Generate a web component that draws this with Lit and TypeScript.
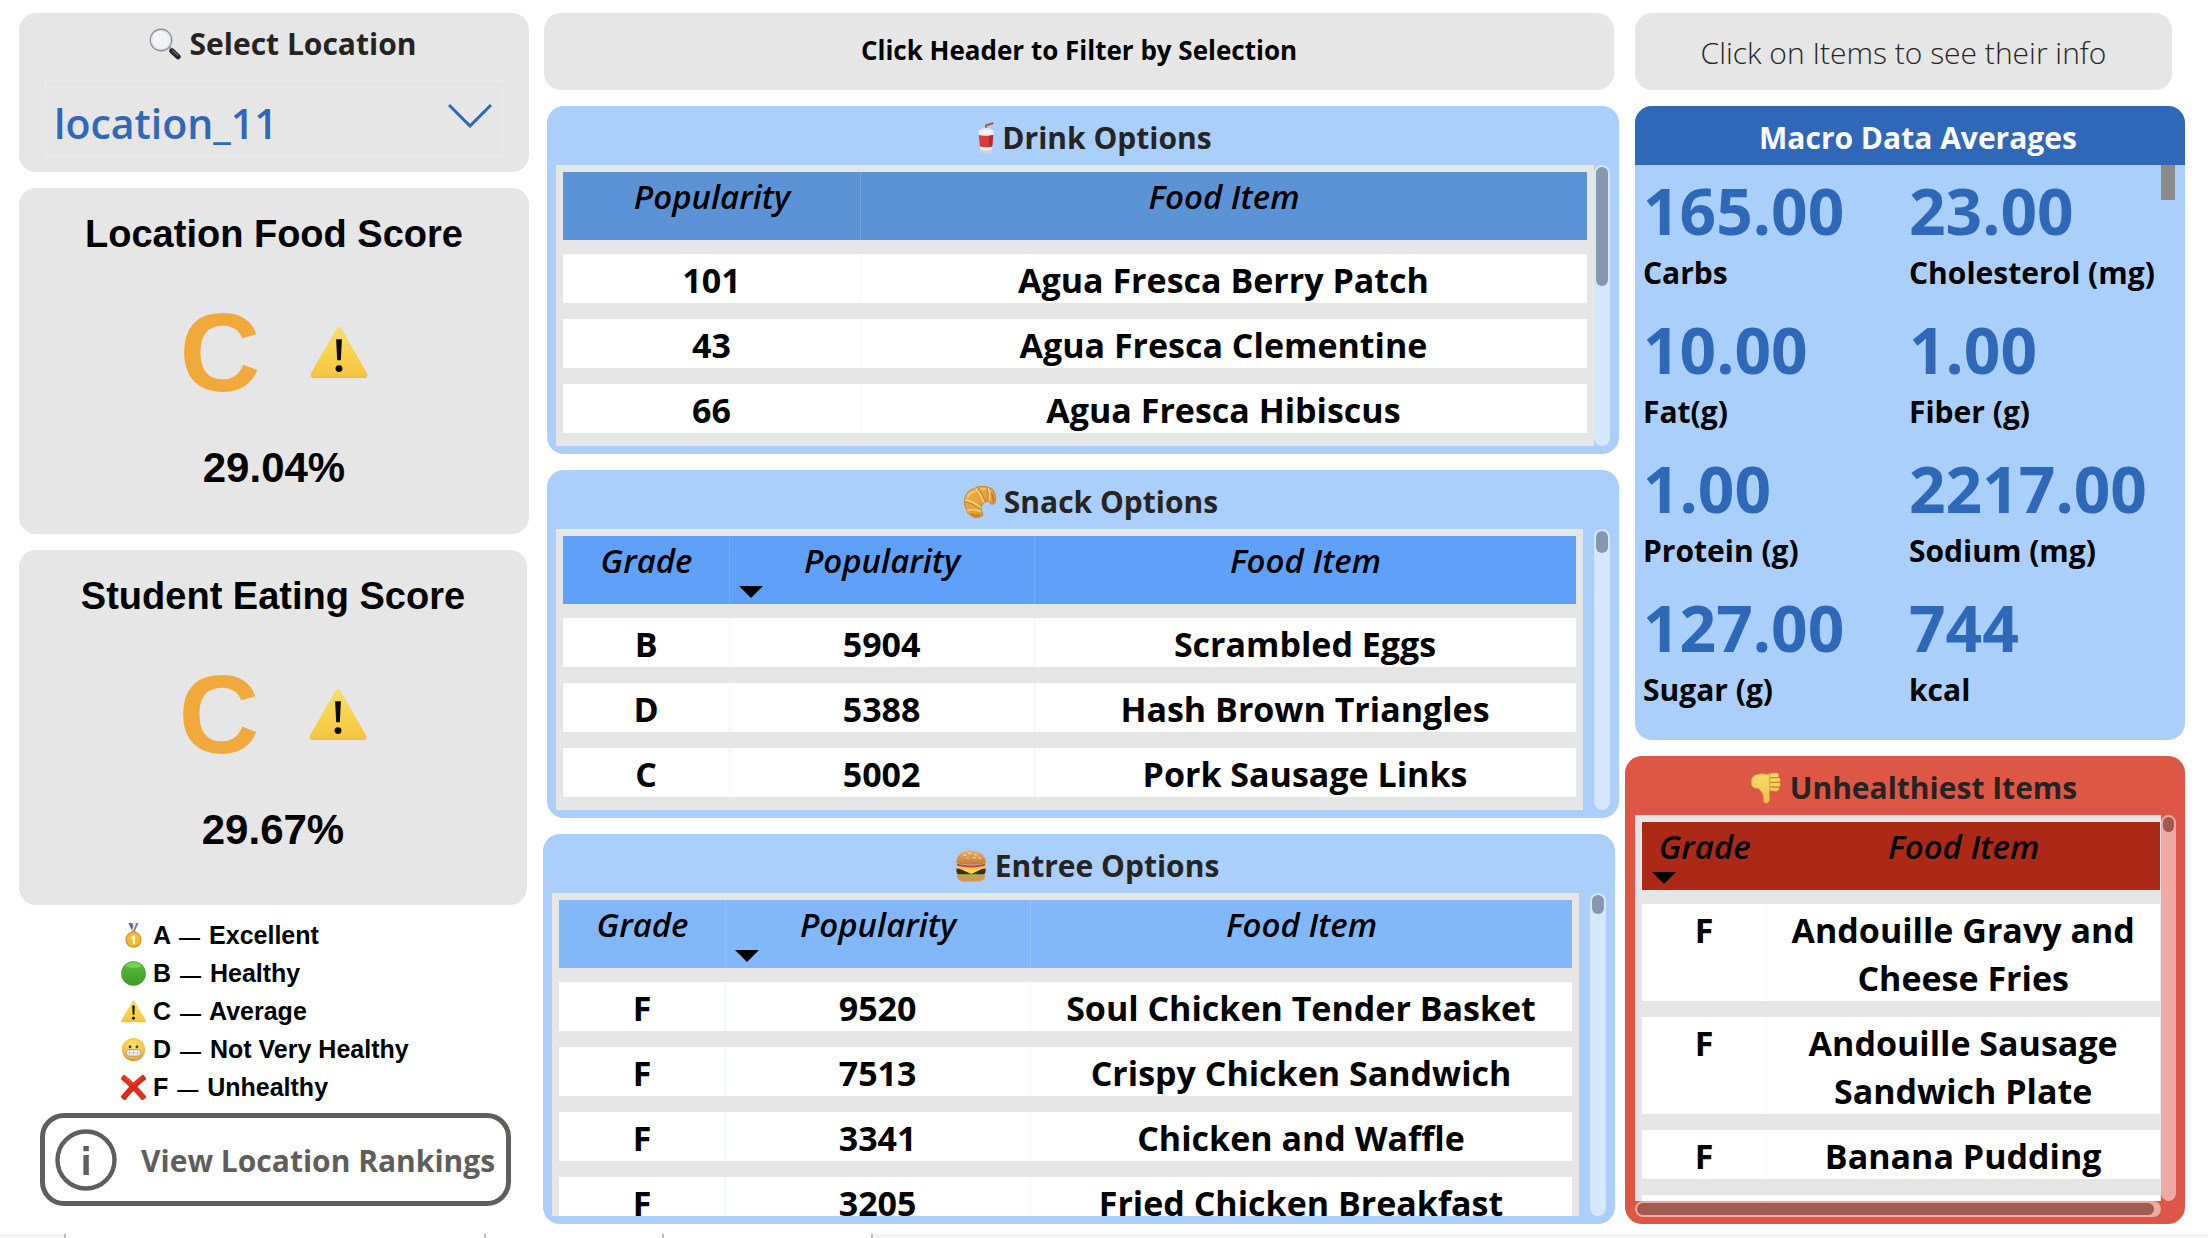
import { LitElement, html, svg, css, nothing, type TemplateResult } from "lit";
import { customElement, property } from "lit/decorators.js";
import { classMap } from "lit/directives/class-map.js";
import { styleMap } from "lit/directives/style-map.js";

const icons: Record<string, TemplateResult> = {
  search: svg`
    <path d="M21 20 L29 28" stroke="#9aa0a6" stroke-width="3" stroke-linecap="round"/>
    <path d="M23 23 L29 28.6" stroke="#26282b" stroke-width="5.4" stroke-linecap="round"/>
    <path d="M23.6 22.6 L28.6 27" stroke="#6b7177" stroke-width="1.2" stroke-linecap="round"/>
    <circle cx="12" cy="12" r="10.6" fill="#f3f4f6" stroke="#8b929a" stroke-width="1.6"/>
    <circle cx="12" cy="12" r="9.4" fill="none" stroke="#dfe3e8" stroke-width="1.4"/>
    <path d="M5 9 A8 8 0 0 1 12 4" fill="none" stroke="#fff" stroke-width="2" stroke-linecap="round"/>`,
  warning: svg`
    <defs><linearGradient id="wg" x1="0" y1="0" x2="0" y2="1"><stop offset="0" stop-color="#f7dc6a"/><stop offset=".5" stop-color="#f8d44e"/><stop offset="1" stop-color="#f6c443"/></linearGradient></defs>
    <path d="M16 3.2 L30.2 28 H1.8 Z" fill="url(#wg)" stroke="url(#wg)" stroke-width="3" stroke-linejoin="round"/>
    <path d="M1 29.4 H31" stroke="#e2b23c" stroke-width=".6"/>
    <path d="M14.4 8.4 H17.6 L17 20 H15 Z" fill="#0b0b0b"/>
    <circle cx="16" cy="24.6" r="1.9" fill="#0b0b0b"/>`,
  medal: svg`
    <path d="M9.6 0 H14 L17 8 L15 12 Z" fill="#3f68b5"/>
    <path d="M22.4 0 H18 L15 8 L17 12 Z" fill="#5b82cc"/>
    <path d="M12.6 0 H14.6 L18 9 L16.6 11 Z" fill="#e8544a"/>
    <path d="M19.4 0 H17.4 L14 9 L15.4 11 Z" fill="#f6f6fa"/>
    <circle cx="16" cy="12" r="2" fill="none" stroke="#b98a1d" stroke-width="1.2"/>
    <circle cx="16" cy="21.4" r="10.4" fill="#d39a22"/>
    <circle cx="16" cy="21" r="8.8" fill="#eebb3c"/>
    <path d="M12.6 18.8 L15.4 16 H18 V26.6 H15 V19.8 L13.4 20.8 Z" fill="#fff4c4"/>`,
  green: svg`
    <defs><linearGradient id="gg" x1="0" y1="0" x2="0" y2="1"><stop offset="0" stop-color="#5fc840"/><stop offset=".35" stop-color="#4db331"/><stop offset="1" stop-color="#3f9a29"/></linearGradient></defs>
    <circle cx="16" cy="16" r="15.4" fill="url(#gg)" stroke="#3c8f2a" stroke-width=".8"/>
    <ellipse cx="16" cy="5.6" rx="9.6" ry="3.6" fill="#8fe36f" opacity=".5"/>`,
  grimace: svg`
    <defs><radialGradient id="fg" cx=".5" cy=".35" r=".65"><stop offset="0" stop-color="#fde472"/><stop offset=".7" stop-color="#f6c544"/><stop offset="1" stop-color="#dd8f2c"/></radialGradient></defs>
    <circle cx="16" cy="16" r="14.8" fill="url(#fg)"/>
    <ellipse cx="11.6" cy="12.4" rx="1.8" ry="2" fill="#5f3510"/>
    <ellipse cx="20.4" cy="12.4" rx="1.8" ry="2" fill="#5f3510"/>
    <rect x="6.6" y="16" width="18.8" height="8.4" rx="3.6" fill="#f4f3f1" stroke="#9b9284" stroke-width="1.1"/>
    <path d="M7 20.2 H25 M11 16.4 V24 M16 16.4 V24 M21 16.4 V24" stroke="#bdb8ae" stroke-width=".9"/>`,
  cross: svg`
    <path d="M4.4 4.4 C10 9 21 20 27.6 27.6" stroke="#e0301f" stroke-width="7.4" stroke-linecap="square" fill="none"/>
    <path d="M27.6 4.4 C20 10 10 21 4.4 27.6" stroke="#d92a1a" stroke-width="7.4" stroke-linecap="square" fill="none"/>
    <path d="M5 2 L16 12.4 L27 2" stroke="#f0604f" stroke-width="1" fill="none"/>`,
  cup: svg`
    <path d="M16.4 8 L16 3.4 L23.4 1.2" fill="none" stroke="#c9423d" stroke-width="1.8" stroke-linejoin="round"/>
    <ellipse cx="16" cy="8" rx="6.4" ry="2.2" fill="#dfe4ea"/>
    <path d="M8.4 9 C8.4 7.6 23.6 7.6 23.6 9 L23.4 12 H8.6 Z" fill="#f1f3f6"/>
    <path d="M8.8 11.4 H23.2 L21.4 29.8 C20.6 31.8 11.4 31.8 10.6 29.8 Z" fill="#eceef1"/>
    <path d="M8.8 13 C12 14 20 14 23.2 13 L22.2 24.2 C19 25.6 13 25.6 9.8 24.2 Z" fill="#d53c3a"/>
    <path d="M19.4 13.8 L18.8 25 C20 24.9 21.4 24.6 22.2 24.2 L23.2 13 Z" fill="#b22c2c"/>
    <path d="M10.4 27.6 C13 28.8 19 28.8 21.6 27.6 L21.4 29.8 C20.6 31.8 11.4 31.8 10.6 29.8 Z" fill="#cfd3d8"/>`,
  croissant: svg`
    <defs><linearGradient id="cg" x1="0" y1="0" x2="1" y2="1"><stop offset="0" stop-color="#eeb04a"/><stop offset="1" stop-color="#dd922f"/></linearGradient></defs>
    <path d="M.6 15 C.8 8 5 3.6 10.6 2.6 C14 -.2 21 -.2 24.4 1.6 C28.4 2 30.6 5.4 31 9 C32.4 12.4 31.8 17 29.6 18 C27.4 18.8 25.4 17.6 25.2 15.2 C21.6 15 18.6 17 17.6 20 C16.8 22.4 16.8 24.6 18 26 C19.6 27.8 19 30 16.6 30.6 C14 32.4 9.6 32 7.4 29.8 C4.4 28.6 2.6 25.8 2.4 22.8 C.6 20.6 .2 18 .6 15 Z" fill="url(#cg)" stroke="#b76f20" stroke-width=".7"/>
    <path d="M1 13.6 C6 14.4 12 18 17 21.8 M11.6 2.4 C14.6 6 18 11.2 20 16.6 M24.2 1.8 C25.6 6 25.8 11 25.2 15.4 M2.8 24.6 C8 22.8 13 23.6 17 25.6" fill="none" stroke="#f9df8c" stroke-width="1.2"/>
    <path d="M1.2 16 C6 16.6 11 19.4 16.8 23.2 M13.8 1.6 C17 6 19.6 10.6 21.6 15.8 M22.6 1.4 C24 6 24.2 10 23.8 15" fill="none" stroke="#c27c26" stroke-width=".9"/>
    <path d="M3.6 11.4 C5 7.8 8 5.8 10.8 5.4 M17 2.8 C18.6 2.6 20.4 2.8 21.4 3.2" fill="none" stroke="#f6c96b" stroke-width="1.8" stroke-linecap="round"/>
    <path d="M28 8 C29.2 10 29.6 13 29 15.6 M6.8 27.6 C9 29.6 13 29.8 16.2 28.6" fill="none" stroke="#bd7422" stroke-width="1.3" stroke-linecap="round"/>`,
  burger: svg`
    <defs><linearGradient id="bg" x1="0" y1="0" x2="0" y2="1"><stop offset="0" stop-color="#eab066"/><stop offset="1" stop-color="#c57a35"/></linearGradient></defs>
    <path d="M2 25 H30 C30.4 29.4 27 31.4 23 31.4 H9 C5 31.4 1.6 29.4 2 25 Z" fill="#d79450"/>
    <path d="M1.4 23.4 C4 27 7 24.6 9 26 C12 27.4 14 25.4 17 26.4 C20 27.2 22 25 25 26 C28 26.4 30 25 30.6 23.2 Z" fill="#8ac53e"/>
    <path d="M1.6 18.6 H30.4 C31 21.4 30.4 23.8 28.6 24.2 H3.4 C1.6 23.8 1 21.4 1.6 18.6 Z" fill="#4a2716"/>
    <path d="M2 17.4 H30 L16.4 24 Z" fill="#fbd84b"/>
    <path d="M1.6 15.4 C8 17.6 24 17.6 30.4 15.4 L30.6 17.8 C24 20 8 20 1.4 17.8 Z" fill="#f5c93d"/>
    <path d="M1.8 13.6 C8 16 24 16 30.2 13.6 L30 15.6 C24 18 8 18 2 15.6 Z" fill="#cf3f32"/>
    <path d="M1.4 12.4 C1.4 4.6 8 .6 16 .6 S30.6 4.6 30.6 12.4 C30.6 15.4 1.4 15.4 1.4 12.4 Z" fill="url(#bg)"/>
    <path d="M9 5.6 l1.6 -.7 M14 3.4 h1.6 M20 4.4 l1.4 .6 M12 8 h1.4 M18.6 7.6 h1.6 M24 7.6 l1.2 .8" stroke="#fbe3b4" stroke-width="1.1" stroke-linecap="round"/>`,
  thumbdown: svg`
    <defs><linearGradient id="tg" x1="0" y1="0" x2="0" y2="1"><stop offset="0" stop-color="#fbdc6c"/><stop offset="1" stop-color="#f3c04a"/></linearGradient></defs>
    <path d="M2.6 5 C6 1.6 12 1.4 17 2.4 L22 1 H27 C29 1.2 29.6 4.2 27.8 5.2 C30.8 5.6 31 9.6 28.8 10.2 C31 11.4 30.6 14.6 28.4 15 C29.8 16.6 28.6 19.2 26.4 19.2 C23.6 19.4 21.6 18.6 20 18.6 C18.6 20 19.6 24 19.6 27 C19.6 32.4 13.4 32.6 13.6 28 C13.8 23.6 12 19.4 8.4 16.6 C5 16.4 2.8 15.6 2 14 C.8 11 1 7.6 2.6 5 Z" fill="url(#tg)" stroke="#dba032" stroke-width=".6"/>
    <path d="M20.6 5.6 H27.8 M20.4 10.4 H28.8 M20.6 15 H28.2" stroke="#c8892a" stroke-width="1.3" stroke-linecap="round"/>
    <path d="M20.8 1.8 C19 3.4 19 5 20.4 5.8 C18.8 7 18.8 9.6 20.2 10.4 C19 12 19.2 14.4 20.4 15 C19.4 16.6 19.4 18 20.2 18.8" fill="none" stroke="#d99a30" stroke-width="1"/>`,
};

const icon = (name: string, cls: string) =>
  html`<svg class=${cls} viewBox="0 0 32 32" fill="none" aria-hidden="true">${icons[name]}</svg>`;

interface Column {
  label: string;
  width: number;
  sorted?: boolean;
}

@customElement("food-table")
export class FoodTable extends LitElement {
  @property() heading = "";
  @property() glyph = "";
  @property() tone = "drink";
  @property({ attribute: false }) columns: Column[] = [];
  @property({ attribute: false }) rows: string[][] = [];
  @property({ attribute: false }) thumb = { size: 10, across: 0 };

  static styles = css`
    :host { display: block; }
    .panel {
      box-sizing: border-box;
      border-radius: 17px;
      padding: 0 9px 8px 9px;
      background: #aacffb;
      font-family: "Open Sans", "Noto Sans", sans-serif;
      overflow: hidden;
    }
    .title {
      display: flex; align-items: center; justify-content: center; gap: 8px;
      height: 59px; margin: 0; padding: 5px 0 0 16px; box-sizing: border-box;
      font-size: 30px; line-height: 40px; font-weight: 700; color: #252423;
    }
    .tight { gap: 0; }
    .emoji { width: 32px; height: 32px; flex: none; }
    .body { display: flex; }
    .spaced { gap: 11px; }
    .view { flex: 1; min-width: 0; height: 281px; overflow: hidden; background: #e6e6e6; box-sizing: border-box; padding: 7px 7px 0; }
    .tall .view { height: 323px; }
    table { width: 100%; border-collapse: separate; border-spacing: 0; table-layout: fixed; }
    th, td { padding: 0; text-align: center; vertical-align: top; }
    th { border-bottom: 14px solid #e6e6e6; background: var(--head); background-clip: padding-box; }
    th + th { box-shadow: inset 1px 0 rgba(255, 255, 255, 0.15); }
    .sort {
      display: flex; flex-direction: column; width: 100%; height: 68px; padding: 0; border: 0;
      background: none; color: #000; font: inherit; font-weight: 600; font-style: italic;
      font-size: 33px; line-height: 50px; cursor: pointer; text-align: center;
    }
    .label { display: block; width: 100%; box-sizing: border-box; padding-left: 1px; }
    .arrow { width: 24px; height: 12px; margin-left: 10px; fill: #000; }
    td {
      border-bottom: 16px solid #e6e6e6; background: #fff; background-clip: padding-box;
      font-size: 34px; line-height: 48px; font-weight: 700; color: #000; padding: 1px 0 0;
    }
    .cell { display: block; margin: 1px 0 -1px; }
    td + td { box-shadow: inset 1px 0 #eef5fe; }
    .track { flex: none; width: 16px; border-radius: 8px; background: #d5e7fd; box-sizing: border-box; padding: 2px; }
    .thumb { border-radius: 6px; background: #8698b0; }
    .drink { --head: #5c93d6; }
    .snack { --head: #5fa1f9; }
    .entree { --head: #82b8f9; }
    .bad { --head: #ac2817; background: #de5746; padding: 0 9px 7px 10px; }
    .bad .view { height: 386px; padding-right: 1px; }
    .bad .track { width: 15px; background: #eeaaa2; }
    .bad .thumb { background: #9f5b50; }
    .bad td + td { box-shadow: inset 1px 0 #f9f9f9; }
    .bad th + th { box-shadow: none; }
    .bad .across { width: auto; height: 16px; margin-right: 15px; }
    .across .thumb { height: 12px; }
  `;

  render() {
    return html`
      <section class=${classMap({ panel: true, [this.tone]: true, tall: this.tone === "entree" })}>
        <h2 class=${classMap({ title: true, tight: this.tone === "drink" })}>
          ${icon(this.glyph, "emoji")}<span>${this.heading}</span>
        </h2>
        <div class=${classMap({ body: true, spaced: this.tone === "snack" || this.tone === "entree" })}>
          <div class="view">
            <table aria-label=${this.heading}>
              <colgroup>${this.columns.map((c) => html`<col style=${styleMap({ width: c.width + "%" })} />`)}</colgroup>
              <thead>
                <tr>
                  ${this.columns.map((c) => html`
                    <th scope="col" aria-sort=${c.sorted ? "descending" : "none"}>
                      <button class="sort" type="button">
                        <span class="label">${c.label}</span>
                        ${c.sorted ? html`<svg class="arrow" viewBox="0 0 24 12" aria-hidden="true"><path d="M0 0H24L12 12Z" /></svg>` : nothing}
                      </button>
                    </th>`)}
                </tr>
              </thead>
              <tbody>${this.rows.map((r) => html`<tr>${r.map((v) => html`<td><span class="cell">${v}</span></td>`)}</tr>`)}</tbody>
            </table>
          </div>
          <div class="track"><div class="thumb" style=${styleMap({ height: this.thumb.size + "%" })}></div></div>
        </div>
        ${this.thumb.across
          ? html`<div class="track across"><div class="thumb" style=${styleMap({ width: this.thumb.across + "%" })}></div></div>`
          : nothing}
      </section>
    `;
  }
}

@customElement("score-card")
export class ScoreCard extends LitElement {
  @property() heading = "";
  @property() grade = "";
  @property() percent = "";

  static styles = css`
    :host { display: block; background: #e6e6e6; border-radius: 17px; font-family: "Liberation Sans", Arial, sans-serif; color: #000; }
    .card { display: flex; flex-direction: column; align-items: center; padding: 24px 0 41px; }
    .name { margin: 0; font-size: 38px; line-height: 44px; font-weight: 700; }
    .mark { display: flex; align-items: center; gap: 50px; padding: 33px 0 26px; }
    .letter { font-size: 112px; line-height: 128px; font-weight: 700; color: #f2a93c; }
    .sign { width: 58px; height: 58px; }
    .value { margin: 0; font-size: 42px; line-height: 50px; font-weight: 700; }
  `;

  render() {
    return html`
      <section class="card">
        <h2 class="name">${this.heading}</h2>
        <div class="mark"><span class="letter">${this.grade}</span>${icon("warning", "sign")}</div>
        <p class="value">${this.percent}</p>
      </section>
    `;
  }
}

@customElement("app-root")
export class AppRoot extends LitElement {
  static styles = css`
    :host {
      display: grid; grid-template-rows: 1fr 4px; min-height: 100vh; background: #fff;
      font-family: "Open Sans", "Noto Sans", sans-serif; color: #000;
    }
    .page {
      display: grid; grid-template-columns: 527fr 1076fr 563fr; align-items: start;
      padding: 13px 23px 0 19px;
    }
    .column { display: flex; flex-direction: column; gap: 16px; min-width: 0; }
    .left { margin-right: 17px; }
    .middle { margin: 0 3px 0 1px; }
    .right { margin-left: 13px; }
    .card { background: #e6e6e6; border-radius: 17px; }
    .picker { height: 159px; box-sizing: border-box; padding: 8px 26px 0; }
    .picker-title {
      display: flex; align-items: center; justify-content: center; gap: 9px; padding-left: 17px;
      font-size: 30px; line-height: 44px; font-weight: 700; color: #252423; height: 59px; box-sizing: border-box; padding-bottom: 14px;
    }
    .emoji { width: 32px; height: 32px; flex: none; }
    .box { display: grid; border: 1px solid #ebebeb; height: 77px; box-sizing: border-box; }
    .select {
      grid-area: 1 / 1; appearance: none; border: 0; background: none; width: 100%; padding: 9px 60px 0 8px;
      font: inherit; font-size: 41px; font-weight: 600; line-height: 60px; color: #2f68b9; cursor: pointer;
    }
    .chevron {
      grid-area: 1 / 1; justify-self: end; align-self: start; width: 44px; height: 24px; margin: 23px 10px 0 0;
      fill: none; stroke: #2f68b9; stroke-width: 3; pointer-events: none;
    }
    .student { padding-bottom: 9px; margin-right: 2px; }
    .legend {
      list-style: none; margin: -4px 0 0 102px; padding: 0; display: grid; gap: 2px;
      font-family: "Liberation Sans", Arial, sans-serif; font-size: 25px; line-height: 36px; font-weight: 700;
    }
    .entry { display: flex; align-items: center; gap: 7px; height: 36px; }
    .dash { font-size: 21px; line-height: 20px; margin: 0 2px; }
    .small { width: 25px; height: 25px; flex: none; }
    .rankings {
      display: flex; align-items: center; gap: 24px; box-sizing: border-box; height: 93px;
      margin: -8px 18px 0 21px; padding: 0 10px; border: 5px solid #605e5c; border-radius: 24px; background: #fff;
      color: #605e5c; font: inherit; font-size: 30px; font-weight: 700; line-height: 40px; white-space: nowrap; cursor: pointer;
    }
    .rankings-label { padding-top: 3px; }
    .info { width: 62px; height: 62px; flex: none; }
    .hint { height: 77px; display: flex; align-items: center; justify-content: center; margin: 0; box-sizing: border-box; }
    .hint-bold { font-size: 26px; line-height: 36px; font-weight: 700; padding-bottom: 4px; margin-right: 5px; margin-left: -3px; }
    .hint-light { font-size: 30px; line-height: 42px; font-weight: 300; color: #252423; padding-top: 3px; margin-right: 13px; }
    .entree { margin: 0 4px 0 -4px; }
    .bad { margin-left: -10px; }
    .macro { background: #aacffb; border-radius: 17px; overflow: hidden; }
    .macro-title {
      margin: 0; height: 59px; box-sizing: border-box; padding: 0 0 0 16px; background: #2f68b9; color: #fff;
      font-size: 30px; line-height: 64px; font-weight: 700; text-align: center;
    }
    .macro-body { display: flex; align-items: flex-start; padding: 0 10px 19px 8px; }
    .facts { flex: 1; margin: 0; display: grid; grid-template-columns: 266fr 252fr; }
    .fact { display: flex; flex-direction: column-reverse; height: 139px; justify-content: flex-end; }
    .number { margin: 0; padding: 4px 0 0; font-size: 64px; line-height: 84px; font-weight: 700; color: #2f68b9; }
    .unit { font-size: 30px; line-height: 40px; font-weight: 700; color: #000; }
    .bar { width: 14px; height: 35px; background: #8a8a8a; }
    .tabs { display: grid; grid-template-columns: 66fr 420fr 178fr 209fr 1335fr; background: #f3f3f3; height: 4px; }
    .tab { border-right: 2px solid #bdbdbd; }
    .open { background: #fff; }
  `;

  private grades: [string, string, string][] = [
    ["medal", "A", "Excellent"],
    ["green", "B", "Healthy"],
    ["warning", "C", "Average"],
    ["grimace", "D", "Not Very Healthy"],
    ["cross", "F", "Unhealthy"],
  ];

  private macros: [string, string][] = [
    ["165.00", "Carbs"], ["23.00", "Cholesterol (mg)"],
    ["10.00", "Fat(g)"], ["1.00", "Fiber (g)"],
    ["1.00", "Protein (g)"], ["2217.00", "Sodium (mg)"],
    ["127.00", "Sugar (g)"], ["744", "kcal"],
  ];

  private graded: Column[] = [
    { label: "Grade", width: 16.4 },
    { label: "Popularity", width: 30.1, sorted: true },
    { label: "Food Item", width: 53.5 },
  ];

  render() {
    return html`
      <main class="page">
        <div class="column left">
          <section class="card picker">
            <label class="picker-title" for="location">${icon("search", "emoji")}<span>Select Location</span></label>
            <div class="box">
              <select class="select" id="location"><option>location_11</option></select>
              <svg class="chevron" viewBox="0 0 44 24" aria-hidden="true"><path d="M1 1 L22 22 L43 1" /></svg>
            </div>
          </section>
          <score-card heading="Location Food Score" grade="C" percent="29.04%"></score-card>
          <score-card class="student" heading="Student Eating Score" grade="C" percent="29.67%"></score-card>
          <ul class="legend">
            ${this.grades.map(([g, letter, text]) => html`<li class="entry">${icon(g, "small")}<span>${letter} <span class="dash">—</span> ${text}</span></li>`)}
          </ul>
          <button class="rankings" type="button">
            <svg class="info" viewBox="0 0 62 62" fill="none" aria-hidden="true">
              <circle cx="31" cy="31" r="28.5" stroke="#605e5c" stroke-width="4.4" />
              <rect x="28.4" y="26" width="5.4" height="20" fill="#605e5c" />
              <rect x="28.4" y="17" width="5.4" height="5.2" fill="#605e5c" />
            </svg>
            <span class="rankings-label">View Location Rankings</span>
          </button>
        </div>

        <div class="column middle">
          <p class="card hint hint-bold">Click Header to Filter by Selection</p>
          <food-table heading="Drink Options" glyph="cup" tone="drink"
            .columns=${[{ label: "Popularity", width: 29 }, { label: "Food Item", width: 71 }]}
            .rows=${[["101", "Agua Fresca Berry Patch"], ["43", "Agua Fresca Clementine"], ["66", "Agua Fresca Hibiscus"]]}
            .thumb=${{ size: 43, across: 0 }}></food-table>
          <food-table heading="Snack Options" glyph="croissant" tone="snack"
            .columns=${this.graded}
            .rows=${[["B", "5904", "Scrambled Eggs"], ["D", "5388", "Hash Brown Triangles"], ["C", "5002", "Pork Sausage Links"]]}
            .thumb=${{ size: 8, across: 0 }}></food-table>
          <food-table class="entree" heading="Entree Options" glyph="burger" tone="entree"
            .columns=${this.graded}
            .rows=${[["F", "9520", "Soul Chicken Tender Basket"], ["F", "7513", "Crispy Chicken Sandwich"], ["F", "3341", "Chicken and Waffle"], ["F", "3205", "Fried Chicken Breakfast"]]}
            .thumb=${{ size: 6, across: 0 }}></food-table>
        </div>

        <div class="column right">
          <p class="card hint hint-light">Click on Items to see their info</p>
          <section class="macro">
            <h2 class="macro-title">Macro Data Averages</h2>
            <div class="macro-body">
              <dl class="facts">
                ${this.macros.map(([n, u]) => html`<div class="fact"><dt class="unit">${u}</dt><dd class="number">${n}</dd></div>`)}
              </dl>
              <div class="bar"></div>
            </div>
          </section>
          <food-table class="bad" heading="Unhealthiest Items" glyph="thumbdown" tone="bad"
            .columns=${[{ label: "Grade", width: 24, sorted: true }, { label: "Food Item", width: 76 }]}
            .rows=${[["F", "Andouille Gravy and Cheese Fries"], ["F", "Andouille Sausage Sandwich Plate"], ["F", "Banana Pudding"], ["F", ""]]}
            .thumb=${{ size: 4, across: 99 }}></food-table>
        </div>
      </main>
      <div class="tabs" aria-hidden="true">
        <span class="tab"></span><span class="tab open"></span><span class="tab open"></span><span class="tab open"></span><span></span>
      </div>
    `;
  }
}
